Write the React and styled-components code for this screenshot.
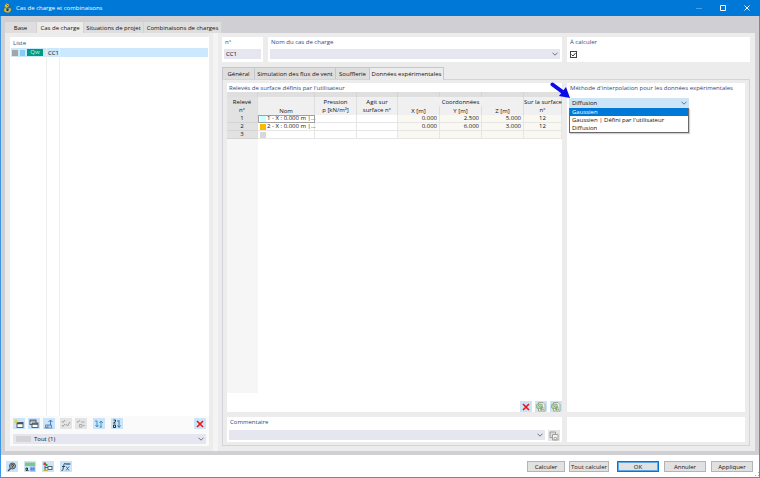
import React from 'react';
import styled, { createGlobalStyle, css } from 'styled-components';

const Global = createGlobalStyle`
  * { box-sizing: border-box; }
  body { margin: 0; }
  body, button, input, select, table {
    font-family: "Open Sans", "Noto Sans", sans-serif;
    font-size: 6px;
    line-height: 8px;
    color: #111;
  }
`;

/* Window frame */
const Window = styled.div`
  display: flex;
  flex-direction: column;
  min-height: 100vh;
  background: #d0d0d4;
  border: 1px solid #3d96e4;
  border-top: 0;
`;
const TitleBar = styled.header`
  display: flex;
  align-items: center;
  gap: 4px;
  height: 16px;
  padding: 0 3px;
  margin: 0 -1px;
  background: #0078d7;
  color: #fff;
`;
const Title = styled.h1`
  flex: 1;
  margin: 0;
  font-size: 6px;
  line-height: 8px;
  font-weight: 400;
`;
const WindowButton = styled.button`
  display: grid;
  place-items: center;
  width: 20px;
  height: 16px;
  padding: 0;
  border: 0;
  background: none;
  opacity: ${p => (p.disabled ? 0.3 : 1)};
`;
const Body = styled.main`
  flex: 1;
  display: flex;
  flex-direction: column;
  padding: 6px 4px 4px;
`;

/* Tabs */
const TabBar = styled.div`
  display: flex;
  position: relative;
`;
const Tab = styled.button`
  height: 11px;
  padding: 0;
  width: ${p => p.$w}px;
  border: 0;
  border-right: 1px solid #d2d2d6;
  white-space: nowrap;
  background: ${p => (p['aria-selected'] ? '#ececec' : '#dedede')};
`;
const InnerTab = styled(Tab)`
  height: 12px;
  border: 1px solid #c6c6ce;
  border-bottom: 0;
  margin-right: -1px;
  ${p => p['aria-selected'] && css`
    height: 13px;
    margin-bottom: -1px;
    position: relative;
  `}
`;

const Page = styled.div`
  flex: 1;
  display: flex;
  padding: 4px 5px 5px;
  background: #ececec;
`;
const Splitter = styled.div`
  width: 5px;
  margin: -4px 4px -5px;
  background: #f4f4f4;
`;
const Box = styled.section`
  display: flex;
  flex-direction: column;
  min-width: 0;
  padding: ${p => p.$pad || '1px 2px'};
  background: #fff;
`;
const Heading = styled.h2`
  margin: 0;
  padding: 0 1px;
  font-size: 6px;
  line-height: 8px;
  font-weight: 400;
  color: #34487c;
  white-space: nowrap;
`;

/* Load case list */
const ListPanel = styled.aside`
  flex: none;
  width: 199px;
  display: flex;
  flex-direction: column;
  background: #fff;
  padding-top: 1px;
`;
const ListHeading = styled(Heading)`
  padding: 0 3px;
  line-height: 10px;
`;
const CaseList = styled.div`
  flex: 1;
  display: flex;
  flex-direction: column;
  padding: 0 1px;
`;
const CaseRow = styled.div`
  display: grid;
  grid-template-columns: 36px 13px 1fr;
  ${p => p.$fill ? css`flex: 1;` : css`height: 9px; background: #cce8ff;`}
`;
const CaseCell = styled.span`
  display: flex;
  align-items: center;
  gap: 2px;
  padding-left: 1px;
  border-right: ${p => (p.$last ? '0' : '1px solid #ededed')};
`;
const Swatch = styled.span`
  display: inline-block;
  flex: none;
  width: ${p => p.$w || 6}px;
  height: ${p => p.$h || 6}px;
  background: ${p => p.$c};
`;
const Badge = styled.span`
  width: 16px;
  height: 7px;
  line-height: 7px;
  text-align: center;
  color: #c9f2e6;
  background: #009b7c;
`;
const ListFooter = styled.div`
  display: flex;
  flex-direction: column;
  gap: 5px;
  padding: 2px 3px;
  background: #fafafa;
`;

const ToolBar = styled.div`
  display: flex;
  gap: ${p => p.$gap || 3}px;
  ${p => p.$end && css`justify-content: flex-end;`}
`;
const ToolGroup = styled.div`
  display: flex;
  gap: 3px;
  margin-right: ${p => p.$after || 0}px;
`;
const ToolButton = styled.button`
  display: grid;
  place-items: center;
  width: 12px;
  height: 11px;
  padding: 0;
  border: 0;
  background: ${p => (p.disabled ? '#e4e4e4' : '#cce4f7')};
`;
const Spacer = styled.span`flex: 1;`;

/* Fields */
const Combo = styled.label`
  display: flex;
  align-items: center;
  flex: ${p => (p.$grow ? 1 : 'none')};
  gap: 3px;
  height: 10px;
  padding: 0 2px 0 3px;
  background: ${p => p.$bg || '#e6e6f1'};
`;
const Select = styled.select`
  flex: 1;
  min-width: 0;
  height: 10px;
  padding: 0;
  border: 0;
  outline: 0;
  appearance: none;
  background: transparent;
`;
const TextField = styled.input`
  width: 100%;
  height: 10px;
  padding: 0 2px;
  border: 0;
  background: #e6e6f1;
`;
const CheckBox = styled.input`
  appearance: none;
  width: 7px;
  height: 7px;
  margin: 2px 1px;
  border: 1px solid #444;
  background: #fff;
`;
const CheckWrap = styled.label`
  display: grid;
  width: 9px;
  & > * { grid-area: 1 / 1; }
  & > svg { margin: 2px 1px; pointer-events: none; }
`;

/* Editor column */
const Editor = styled.div`
  flex: 1;
  min-width: 0;
  display: flex;
  flex-direction: column;
`;
const TopRow = styled.div`
  display: grid;
  grid-template-columns: 41px 1fr 183px;
  gap: 5px;
  margin-bottom: 5px;
`;
const FieldBox = styled(Box)`
  height: 25px;
  gap: 3px;
`;
const Frame = styled.div`
  flex: 1;
  display: grid;
  grid-template: 1fr 25px / 1fr 178px;
  gap: 5px;
  padding: 3px 4px;
  border: 1px solid #d3d3d9;
`;
const TableBox = styled(Box)`
  padding: 1px 0 0;
  & > h2 { padding-left: 2px; }
`;
const Sheet = styled.div`
  flex: 1;
  display: flex;
  flex-direction: column;
  margin-bottom: 8px;
`;
const GutterFill = styled.div`
  flex: 1;
  width: 31px;
  background: #f6f6f6;
`;
const Table = styled.table`
  width: 100%;
  table-layout: fixed;
  border-collapse: separate;
  border-spacing: 0;
`;
const Col = styled.col`width: ${p => p.$w}px;`;
const Th = styled.th`
  height: ${p => p.$h || 9}px;
  padding: 0;
  font-weight: 400;
  line-height: 8px;
  white-space: nowrap;
  vertical-align: ${p => p.$v || 'middle'};
  background: ${p => p.$bg || '#f0f0f0'};
  border-right: 1px solid ${p => p.$line || '#dedede'};
`;
const Td = styled.td`
  height: 8px;
  padding: ${p => (p.$name ? '0 0 0 2px' : '0 2px')};
  line-height: 7px;
  white-space: nowrap;
  text-align: ${p => p.$align || 'left'};
  background: ${p => (p.$ro ? '#f9f9f2' : '#fff')};
  border-right: 1px solid #e6e6e6;
  border-bottom: 1px solid #e6e6e6;
  ${p => p.$focus && css`outline: 1px solid #a0a0a0; outline-offset: -1px;`}
`;
const RowHead = styled(Th).attrs({ scope: 'row', $bg: '#e2e2e2' })`
  height: 8px;
  line-height: 7px;
  border-bottom: 1px solid #d4d4d4;
`;
const NameCell = styled.span`
  display: flex;
  align-items: center;
  gap: 1px;
  height: 7px;
`;
const CommentRow = styled.div`
  display: flex;
  gap: 3px;
`;

/* Interpolation method drop-down */
const MethodBox = styled(Box)`gap: 6px;`;
const ComboHost = styled.div`
  position: relative;
  width: 120px;
`;
const OptionList = styled.ul`
  position: absolute;
  top: 100%;
  left: 0;
  right: 0;
  z-index: 2;
  margin: 0;
  padding: 0;
  list-style: none;
  background: #fff;
  border: 1px solid #6a6a6a;
  border-top: 0;
  box-shadow: 1px 1px 1px #8886;
`;
const Option = styled.li`
  height: 8px;
  padding: 0 2px;
  line-height: 8px;
  white-space: nowrap;
  color: ${p => (p['aria-selected'] ? '#fff' : 'inherit')};
  background: ${p => (p['aria-selected'] ? '#0078d7' : 'transparent')};
`;
const Pointer = styled.svg`
  position: absolute;
  right: 100%;
  bottom: 100%;
  margin: 0 -2px -1px 0;
  z-index: 3;
`;

/* Footer */
const Footer = styled.footer`
  display: flex;
  justify-content: space-between;
  height: 22px;
  padding: 6px 3px 0 5px;
  background: #fff;
`;
const PushButton = styled.button`
  width: ${p => p.$w || 42}px;
  height: 11px;
  padding: 0;
  line-height: 8px;
  background: #e1e1e1;
  border: 1px solid #b4b4b4;
  white-space: nowrap;
  ${p => p.$primary && css`
    border: 1px solid #0078d7;
    box-shadow: inset 0 0 0 1px #5aa9e6;
  `}
`;
const Grip = styled.svg`
  align-self: flex-end;
  margin: 0 -3px 1px -3px;
`;
const ButtonRow = styled.div`
  display: flex;
  gap: 5px;
`;
const PushGroup = styled.div`
  display: flex;
  gap: 4px;
  margin-right: 3px;
`;

/* Icons */
const Chevron = () => (
  <svg width="6" height="4" viewBox="0 0 6 4" fill="none" stroke="#555" strokeWidth=".8"><path d="M.5 .7 3 3.2 5.5 .7" /></svg>
);
const Svg = ({ children }) => (
  <svg width="10" height="10" viewBox="0 0 20 20" fill="none" stroke="#44515f" strokeWidth="1.8">{children}</svg>
);
const icons = {
  app: (
    <svg width="9" height="10" viewBox="0 0 18 20">
      <path d="M6 1 3 7l4 3 5-4-1-4zM3 10l-1 6 5 3h5l4-4-1-5-6 2z" fill="#f2b81b" />
      <circle cx="9" cy="14" r="2.500" fill="#28374b" />
      <path d="m7 3 3 3M12 6l3 2" stroke="#6b4a10" strokeWidth="1.500" />
    </svg>
  ),
  create: <Svg><rect x="6" y="7" width="12" height="10" fill="#fff" /><path d="M6 9h12" strokeWidth="3" /><path d="m4 0 1 3 3-1-2 3 2 3-3-1-1 3-1-3-3 1 2-3-2-3 3 1z" fill="#e7cf35" stroke="none" /></Svg>,
  copy: <Svg><rect x="2" y="2" width="12" height="9" fill="#fff" /><path d="M2 4h12" /><rect x="6" y="8" width="12" height="9" fill="#fff" /><path d="M6 10h12" strokeWidth="3" /></Svg>,
  load: <Svg><path d="M1 18h16M3 12h5v5H3zM8 12h7v5" stroke="#5b80b4" fill="#a9c8ea" /><path d="M13 12V3M9 6l4-4 4 4" stroke="#3770bd" /></Svg>,
  checks: <Svg><path d="m2 4 2 3 4-5M2 12l2 3 4-5M10 10l3 4 5-8" stroke="#999" /></Svg>,
  unchecks: <Svg><path d="m2 4 2 3 4-5M10 6h7M7 11h5v5H7zM14 13h4" stroke="#a5a5a5" /></Svg>,
  renumber: <Svg><path d="M6 4v11M3 12l3 4 3-4M2 4h4M11 16h5M14 4v12M11 8l3-4 4 4" stroke="#2e8bc2" /></Svg>,
  sort: <Svg><path d="M3 2h4v3L3 8h4M3 12h4v5H3z" stroke="#1d1d1d" /><path d="M14 2v14M11 13l3 4 3-4M10 4h3" stroke="#2a6ca3" /></Svg>,
  remove: <svg width="8" height="8" viewBox="0 0 8 8" stroke="#f01414" strokeWidth="1.600"><path d="m1 1 6 6M7 1 1 7" /></svg>,
  excel: <Svg><path d="M5 1h9l4 4v13H5z" fill="#edf3e8" stroke="#7d8a78" strokeWidth="1.300" /><rect x="1" y="4" width="12" height="9" rx="3" fill="#b4d2a2" stroke="#7c9b74" strokeWidth="1.300" /><path d="M8 12h8M8 15h8M11 8v9M4 6l5 5" stroke="#7da473" strokeWidth="1.400" /></Svg>,
  pages: <Svg><path d="M2 2h11v11H2z" stroke="#999" fill="#ddd" /><path d="M7 7h11v11H7z" stroke="#999" fill="#f3f3f3" /><path d="M10 13h5v4h-5z" stroke="#aaa" /></Svg>,
  help: <Svg><circle cx="11" cy="8" r="6" fill="#9aa3aa" /><path d="m7 13-5 5" strokeWidth="3" /><path d="M9 7c0-3 4-3 4 0l-2 2v2" stroke="#222" /></Svg>,
  units: <Svg><path d="M0 1h20v7H0z" fill="#7fc58a" stroke="none" /><path d="M10 9h10v10H10z" fill="#8db8ef" stroke="none" /><path d="M2 12h3v5H2zM7 17h1" stroke="#222" /><path d="M12 12h2v4h-2zM16 12h2v4h-2z" stroke="#356fc2" strokeWidth="1" /></Svg>,
  view: <Svg><path d="M1 1h5v5H1z" fill="#e03131" stroke="none" /><path d="M5 4h4v4H5z" fill="#2ea043" stroke="none" /><path d="M4 7v10h5M4 11h6" /><rect x="10" y="9" width="8" height="6" fill="#fff" /><path d="M1 17h9" stroke="#d7b52b" /></Svg>,
  formula: <Svg><path d="M9 3C6 1 6 6 5 9s0 9-4 8M2 9h6" stroke="#24364a" /><path d="m10 9 6 8M16 9l-6 8M8 4h11M12 2v4M16 2v4" stroke="#33629c" /></Svg>,
};
const Tool = ({ icon, label, disabled }) => (
  <ToolButton type="button" aria-label={label} disabled={disabled}>{icons[icon]}</ToolButton>
);

const rows = [
  { n: 1, color: '#ccffff', name: '1 - X : 0.000 m |...', x: '0.000', y: '2.500', z: '5.000', s: '12' },
  { n: 2, color: '#f9bd00', name: '2 - X : 0.000 m |...', x: '0.000', y: '6.000', z: '3.000', s: '12' },
  { n: 3, color: '#d8d8d8', name: '', x: '', y: '', z: '', s: '' },
];

const SurveyTable = () => (
  <Table>
    <colgroup>
      {[31, 57, 42, 41, 42, 42, 42, 38].map((w, i) => <Col key={i} $w={w} />)}
    </colgroup>
    <thead>
      <tr>{[0, 1, 2, 3, 4, 5, 6, 7].map(i => <Th key={i} as="td" $h={5} $bg="#dfdfdf" $line="#d4d4d4" />)}</tr>
      <tr>
        <Th rowSpan={2} $bg="#e2e2e2">Relevé<br />n°</Th>
        <Th rowSpan={2} $v="bottom">Nom</Th>
        <Th rowSpan={2}>Pression<br />p [kN/m²]</Th>
        <Th rowSpan={2}>Agit sur<br />surface n°</Th>
        <Th colSpan={3}>Coordonnées</Th>
        <Th rowSpan={2}>Sur la surface<br />n°</Th>
      </tr>
      <tr><Th>X [m]</Th><Th>Y [m]</Th><Th>Z [m]</Th></tr>
    </thead>
    <tbody>
      {rows.map(r => (
        <tr key={r.n}>
          <RowHead>{r.n}</RowHead>
          <Td $name $focus={r.n === 1}>
            <NameCell><Swatch $c={r.color} />{r.name}</NameCell>
          </Td>
          <Td /><Td />
          <Td $ro $align="right">{r.x}</Td>
          <Td $ro $align="right">{r.y}</Td>
          <Td $ro $align="right">{r.z}</Td>
          <Td $ro $align="center">{r.s}</Td>
        </tr>
      ))}
    </tbody>
  </Table>
);

const methods = ['Gaussien', "Gaussien | Défini par l'utilisateur", 'Diffusion'];

export default function App() {
  return (
    <Window>
      <Global />
      <TitleBar>
        {icons.app}
        <Title>Cas de charge et combinaisons</Title>
        <WindowButton aria-label="Réduire" disabled><svg width="6" height="6"><path d="M0 3.500h6" stroke="#fff" /></svg></WindowButton>
        <WindowButton aria-label="Agrandir"><svg width="6" height="6" fill="none"><path d="M.5.5h5v5h-5z" stroke="#fff" /></svg></WindowButton>
        <WindowButton aria-label="Fermer"><svg width="6" height="6"><path d="m.5.5 5 5M5.500.5l-5 5" stroke="#fff" /></svg></WindowButton>
      </TitleBar>
      <Body>
        <TabBar role="tablist">
          <Tab role="tab" $w={32} aria-selected={false}>Base</Tab>
          <Tab role="tab" $w={47} aria-selected>Cas de charge</Tab>
          <Tab role="tab" $w={60} aria-selected={false}>Situations de projet</Tab>
          <Tab role="tab" $w={78} aria-selected={false}>Combinaisons de charges</Tab>
        </TabBar>
        <Page>
          <ListPanel>
            <ListHeading>Liste</ListHeading>
            <CaseList>
              <CaseRow>
                <CaseCell><Swatch $c="#a5a5a5" /><Swatch $c="#86cff2" $w={5} /><Badge>Qw</Badge></CaseCell>
                <CaseCell>CC1</CaseCell>
                <CaseCell $last />
              </CaseRow>
              <CaseRow $fill><CaseCell /><CaseCell /><CaseCell $last /></CaseRow>
            </CaseList>
            <ListFooter>
              <ToolBar>
                <ToolGroup $after={2}>
                  <Tool icon="create" label="Nouveau" />
                  <Tool icon="copy" label="Copier" />
                  <Tool icon="load" label="Importer" />
                </ToolGroup>
                <ToolGroup $after={3}>
                  <Tool icon="checks" label="Tout cocher" disabled />
                  <Tool icon="unchecks" label="Tout décocher" disabled />
                </ToolGroup>
                <ToolGroup $after={3}><Tool icon="renumber" label="Renuméroter" /></ToolGroup>
                <Tool icon="sort" label="Trier" />
                <Spacer />
                <Tool icon="remove" label="Supprimer" />
              </ToolBar>
              <Combo>
                <Swatch $c="#d4d4d4" $w={15} />
                <Select aria-label="Filtre"><option>Tout (1)</option></Select>
                <Chevron />
              </Combo>
            </ListFooter>
          </ListPanel>
          <Splitter />
          <Editor>
            <TopRow>
              <FieldBox>
                <Heading as="label" htmlFor="num">n°</Heading>
                <TextField id="num" defaultValue="CC1" />
              </FieldBox>
              <FieldBox>
                <Heading as="label" htmlFor="name">Nom du cas de charge</Heading>
                <Combo><Select id="name"><option /></Select><Chevron /></Combo>
              </FieldBox>
              <FieldBox>
                <Heading as="label" htmlFor="calc">À calculer</Heading>
                <CheckWrap>
                  <CheckBox type="checkbox" id="calc" defaultChecked />
                  <svg width="7" height="7" fill="none" stroke="#222" strokeWidth=".9"><path d="m1.500 3.500 1.500 1.500 2.500-3" /></svg>
                </CheckWrap>
              </FieldBox>
            </TopRow>
            <TabBar role="tablist">
              <InnerTab role="tab" $w={33} aria-selected={false}>Général</InnerTab>
              <InnerTab role="tab" $w={82} aria-selected={false}>Simulation des flux de vent</InnerTab>
              <InnerTab role="tab" $w={35} aria-selected={false}>Soufflerie</InnerTab>
              <InnerTab role="tab" $w={75} aria-selected>Données expérimentales</InnerTab>
            </TabBar>
            <Frame>
              <TableBox>
                <Heading>Relevés de surface définis par l'utilisateur</Heading>
                <Sheet>
                  <SurveyTable />
                  <GutterFill />
                </Sheet>
                <ToolBar $end>
                  <Tool icon="remove" label="Supprimer la ligne" />
                  <Tool icon="excel" label="Exporter" />
                  <Tool icon="excel" label="Importer le tableau" />
                </ToolBar>
              </TableBox>
              <MethodBox>
                <Heading as="label" htmlFor="method">Méthode d'interpolation pour les données expérimentales</Heading>
                <ComboHost>
                  <Combo $bg="#cce4f7">
                    <Select id="method" defaultValue="Diffusion">
                      {methods.map(m => <option key={m}>{m}</option>)}
                    </Select>
                    <Chevron />
                  </Combo>
                  <OptionList role="listbox">
                    {methods.map((m, i) => <Option key={m} role="option" aria-selected={i === 0}>{m}</Option>)}
                  </OptionList>
                  <Pointer width="21" height="17" viewBox="0 0 21 17">
                    <path d="M2.500 2.500 14 11" stroke="#0b0bea" strokeWidth="4" strokeLinecap="round" />
                    <path d="M20 16 9 14 16 5z" fill="#0b0bea" />
                  </Pointer>
                </ComboHost>
              </MethodBox>
              <Box>
                <Heading as="label" htmlFor="comment">Commentaire</Heading>
                <Spacer />
                <CommentRow>
                  <Combo $grow><Select id="comment"><option /></Select><Chevron /></Combo>
                  <Tool icon="pages" label="Commentaires enregistrés" disabled />
                </CommentRow>
              </Box>
              <Box />
            </Frame>
          </Editor>
        </Page>
      </Body>
      <Footer>
        <ToolBar $gap={6}>
          <Tool icon="help" label="Aide" />
          <Tool icon="units" label="Unités" />
          <Tool icon="view" label="Affichage" />
          <Tool icon="formula" label="Formules" />
        </ToolBar>
        <ButtonRow>
          <PushGroup>
            <PushButton $w={38}>Calculer</PushButton>
            <PushButton $w={40}>Tout calculer</PushButton>
          </PushGroup>
          <PushButton $primary>OK</PushButton>
          <PushButton>Annuler</PushButton>
          <PushButton>Appliquer</PushButton>
          <Grip width="4" height="4" fill="#b5b5b5"><path d="M3 0h1v1H3zM3 3h1v1H3zM0 3h1v1H0z" /></Grip>
        </ButtonRow>
      </Footer>
    </Window>
  );
}
